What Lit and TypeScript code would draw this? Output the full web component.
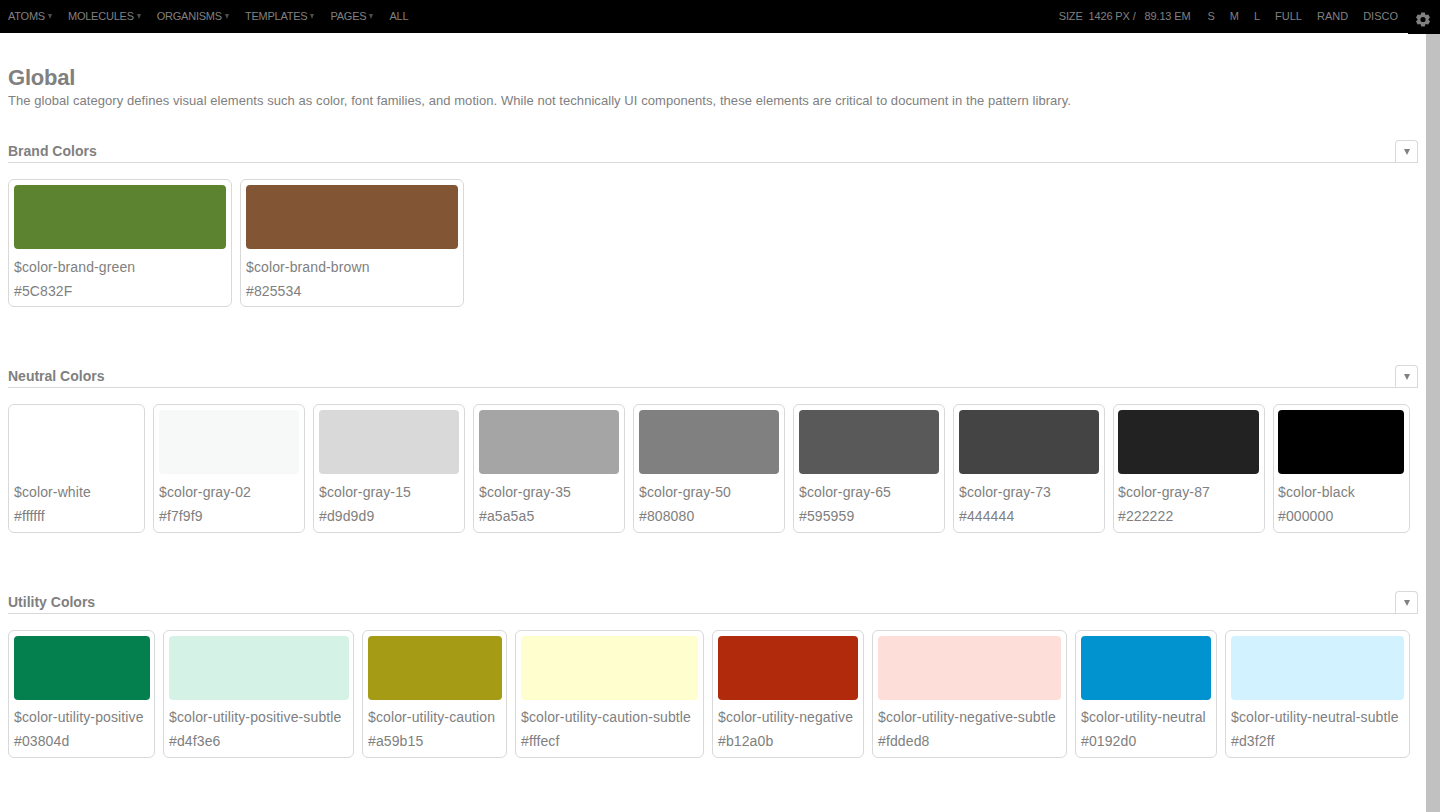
import { LitElement, html, css, svg } from "lit";
import { customElement } from "lit/decorators.js";

type Sw = { n: string; h: string; w: number; right?: number; left?: number };
const groups: { title: string; gap: number; nameTop: number; pad: number; items: Sw[] }[] = [
  { title: "Brand Colors", gap: 57, nameTop: 6, pad: 3, items: [
    { n: "$color-brand-green", h: "#5C832F", w: 224 },
    { n: "$color-brand-brown", h: "#825534", w: 224 },
  ]},
  { title: "Neutral Colors", gap: 57, nameTop: 6, pad: 4, items: [
    { n: "$color-white", h: "#ffffff", w: 137 },
    { n: "$color-gray-02", h: "#f7f9f9", w: 152 },
    { n: "$color-gray-15", h: "#d9d9d9", w: 152 },
    { n: "$color-gray-35", h: "#a5a5a5", w: 152 },
    { n: "$color-gray-50", h: "#808080", w: 152 },
    { n: "$color-gray-65", h: "#595959", w: 152 },
    { n: "$color-gray-73", h: "#444444", w: 152 },
    { n: "$color-gray-87", h: "#222222", w: 152, left: 1 },
    { n: "$color-black", h: "#000000", w: 137, left: 1 },
  ]},
  { title: "Utility Colors", gap: 0, nameTop: 5, pad: 4, items: [
    { n: "$color-utility-positive", h: "#03804d", w: 147, right: 1 },
    { n: "$color-utility-positive-subtle", h: "#d4f3e6", w: 191, right: 1 },
    { n: "$color-utility-caution", h: "#a59b15", w: 145, right: 1 },
    { n: "$color-utility-caution-subtle", h: "#fffecf", w: 189 },
    { n: "$color-utility-negative", h: "#b12a0b", w: 152 },
    { n: "$color-utility-negative-subtle", h: "#fdded8", w: 195 },
    { n: "$color-utility-neutral", h: "#0192d0", w: 142 },
    { n: "$color-utility-neutral-subtle", h: "#d3f2ff", w: 185 },
  ]},
];

const gearPoints = (): string => {
  const cx = 7, cy = 7.500;
  const pts: string[] = [];
  for (let k = 0; k < 6; k++) {
    const a = (k * Math.PI) / 3 - Math.PI / 2;
    for (const [r, da] of [[5.200, -0.520], [7.300, -0.240], [7.300, 0.240], [5.200, 0.520]]) {
      pts.push(`${(cx + r * Math.cos(a + da)).toFixed(2)} ${(cy + r * Math.sin(a + da)).toFixed(2)}`);
    }
  }
  return `M${pts.join("L")}Z M${cx - 2.600} ${cy}a2.600 2.600 0 1 0 5.200 0a2.600 2.600 0 1 0 -5.200 0Z`;
};
const gear = svg`<path fill="#808080" fill-rule="evenodd" d=${gearPoints()}/>`;

@customElement("app-root")
export class AppRoot extends LitElement {
  static styles = css`
    :host { display: block; height: 812px; overflow: hidden; position: relative; background: #fff;
      font-family: "Liberation Sans", Arial, sans-serif; color: #808080; }
    .top { height: 33px; background: #000; display: flex; align-items: center; justify-content: space-between;
      font-size: 11px; line-height: 31px; padding: 0 42px 1px 8px; box-sizing: border-box; }
    .nav, .tools { display: flex; align-items: center; }
    .nav { letter-spacing: -0.23px; gap: 24px; }
    .nav span { display: flex; align-items: center; }
    .nav i { margin: 1px -8px 0 3px; width: 0; height: 0; border-left: 2.500px solid transparent; border-right: 2.500px solid transparent;
      border-top: 5px solid #4d4d4d; }
    .tools { gap: 15px; }
    .size { display: flex; letter-spacing: -0.15px; margin-right: 2px; }
    .size b { font-weight: 400; margin-right: 6px; }
    .size em { font-style: normal; margin-left: 9px; }
    .gear { position: absolute; top: 0; right: 0; width: 32px; height: 34px; background: #000; display: flex; align-items: center; justify-content: center; }
    .gear svg { display: block; margin: 4px 2px 0 0; }
    .body { display: flex; height: 779px; }
    main { flex: 1; min-width: 0; padding: 33px 8px 0; }
    .bar { width: 14px; background: #c1c1c1; }
    h1 { margin: 0; font-size: 22px; line-height: 24px; font-weight: 700; letter-spacing: -0.2px; }
    .desc { margin: 0 0 27px; font-size: 13px; line-height: 22px; letter-spacing: 0.06px; }
    .head { display: flex; justify-content: space-between; align-items: flex-end; border-bottom: 1px solid #d9d9d9; height: 23px; }
    h2 { margin: 0; font-size: 14px; line-height: 22px; font-weight: 700; }
    .tog { width: 23px; height: 22px; box-sizing: border-box; border: 1px solid #d9d9d9; border-bottom: 0; border-radius: 4px 4px 0 0;
      display: flex; align-items: center; justify-content: center; }
    .tog i { width: 0; height: 0; border-left: 3.500px solid transparent; border-right: 3.500px solid transparent; border-top: 6px solid #808080; }
    .cards { display: flex; gap: 8px; margin-top: 16px; }
    .card { box-sizing: border-box; border: 1px solid #d9d9d9; border-radius: 6px; padding: 5px; }
    .sw { height: 64px; border-radius: 4px; }
    .name, .hex { font-size: 14px; line-height: 24px; white-space: nowrap; letter-spacing: 0.12px; }
  `;
  render() {
    return html`
      <div class="top">
        <div class="nav">
          ${["ATOMS", "MOLECULES", "ORGANISMS", "TEMPLATES", "PAGES"].map((t) => html`<span>${t}<i></i></span>`)}
          <span>ALL</span>
        </div>
        <div class="tools">
          <span class="size"><b>SIZE</b>1426 PX /<em>89.13 EM</em></span>
          ${["S", "M", "L", "FULL", "RAND", "DISCO"].map((t) => html`<span>${t}</span>`)}
        </div>
      </div>
      <div class="gear"><svg width="14" height="15" viewBox="0 0 14 15">${gear}</svg></div>
      <div class="body">
        <main>
          <h1>Global</h1>
          <p class="desc">The global category defines visual elements such as color, font families, and motion. While not technically UI components, these elements are critical to document in the pattern library.</p>
          ${groups.map((g) => html`
            <section style="margin-bottom:${g.gap}px">
              <div class="head"><h2>${g.title}</h2><div class="tog"><i></i></div></div>
              <div class="cards">
                ${g.items.map((s) => html`
                  <div class="card" style="width:${s.w}px;padding-bottom:${g.pad}px;padding-left:${5 - (s.left ?? 0)}px">
                    <div class="sw" style="background:${s.h};margin-right:${-(s.right ?? 0)}px"></div>
                    <div class="name" style="margin-top:${g.nameTop}px">${s.n}</div>
                    <div class="hex">${s.h}</div>
                  </div>`)}
              </div>
            </section>`)}
        </main>
        <div class="bar"></div>
      </div>
    `;
  }
}
